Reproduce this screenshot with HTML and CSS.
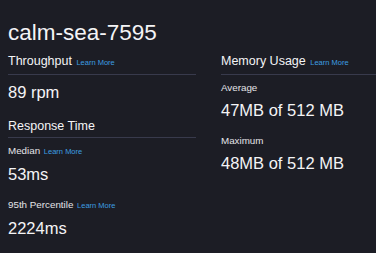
FILE: index.html
```html
<!DOCTYPE html>
<html lang="en">
<head>
    <meta charset="UTF-8">
    <meta name="viewport" content="width=device-width, initial-scale=1.0">
    <title>calm-sea-7595</title>
    <link rel="stylesheet" href="styles.css">
</head>
<body>
    <div class="app">
        <h1 class="app-name">calm-sea-7595</h1>
        <div class="columns">
            <div class="column">
                <div class="section">
                    <h2 class="section-title">Throughput <a href="#" class="learn">Learn More</a></h2>
                    <div class="value first">89 rpm</div>
                </div>
                <div class="section">
                    <h2 class="section-title spaced">Response Time</h2>
                    <div class="metric">
                        <div class="label">Median <a href="#" class="learn">Learn More</a></div>
                        <div class="value">53ms</div>
                    </div>
                    <div class="metric">
                        <div class="label">95th Percentile <a href="#" class="learn">Learn More</a></div>
                        <div class="value">2224ms</div>
                    </div>
                </div>
            </div>
            <div class="column">
                <div class="section">
                    <h2 class="section-title">Memory Usage <a href="#" class="learn">Learn More</a></h2>
                    <div class="metric">
                        <div class="label">Average</div>
                        <div class="value">47MB of 512 MB</div>
                    </div>
                    <div class="metric">
                        <div class="label">Maximum</div>
                        <div class="value">48MB of 512 MB</div>
                    </div>
                </div>
            </div>
        </div>
    </div>
</body>
</html>
```

FILE: styles.css
```css
body {
    margin: 0;
    background: #1c1d25;
    color: #f4f4f6;
    font-family: 'Liberation Sans', Arial, sans-serif;
}
.app {
    padding: 20px 0 0 8px;
}
.app-name {
    margin: 0;
    font-size: 22.5px;
    line-height: 26px;
    font-weight: normal;
}
.columns {
    display: grid;
    grid-template-columns: 188px 1fr;
    gap: 25px;
    margin-top: 7px;
}
.section-title {
    margin: 0;
    padding-bottom: 3px;
    border-bottom: 1px solid #383a4c;
    font-size: 12.5px;
    line-height: 16px;
    font-weight: normal;
}
.section-title.spaced {
    margin-top: 16px;
}
.learn {
    margin-left: 1px;
    font-size: 7.5px;
    color: #3d9de0;
    text-decoration: none;
}
.metric {
    margin-top: 15px;
}
.metric:first-of-type {
    margin-top: 7px;
}
.label {
    font-size: 9.8px;
    line-height: 12px;
    color: #e4e4e8;
}
.value {
    margin-top: 6px;
    font-size: 16.5px;
    line-height: 20px;
}
.value.first {
    margin-top: 7px;
}
```
